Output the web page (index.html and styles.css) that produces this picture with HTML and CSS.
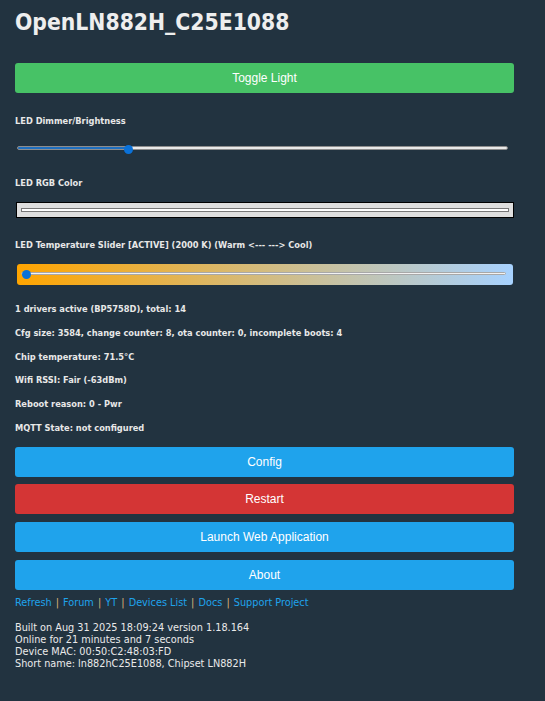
FILE: index.html
```html
<!DOCTYPE html>
<html lang="en">
<head>
    <meta charset="UTF-8">
    <meta name="viewport" content="width=device-width, initial-scale=1.0">
    <title>OpenLN882H_C25E1088</title>
    <link rel="stylesheet" href="styles.css">
</head>
<body>
    <div class="page">
        <h1 class="title">OpenLN882H_C25E1088</h1>

        <button class="btn btn-green">Toggle Light</button>

        <h5 class="label label-dimmer">LED Dimmer/Brightness</h5>
        <input type="range" class="dimmer" min="0" max="100" value="22" style="--fill: 22.8%">

        <h5 class="label label-rgb">LED RGB Color</h5>
        <input type="color" class="rgb" value="#ffffff">

        <h5 class="label label-temp">LED Temperature Slider [ACTIVE] (2000 K) (Warm &lt;--- ---&gt; Cool)</h5>
        <input type="range" class="temp" min="0" max="100" value="0">

        <div class="info">
            <h5 class="label">1 drivers active (BP5758D), total: 14</h5>
            <h5 class="label">Cfg size: 3584, change counter: 8, ota counter: 0, incomplete boots: 4</h5>
            <h5 class="label">Chip temperature: 71.5°C</h5>
            <h5 class="label">Wifi RSSI: Fair (-63dBm)</h5>
            <h5 class="label">Reboot reason: 0 - Pwr</h5>
            <h5 class="label">MQTT State: not configured</h5>
        </div>

        <div class="menu">
            <button class="btn">Config</button>
            <button class="btn btn-red">Restart</button>
            <button class="btn">Launch Web Application</button>
            <button class="btn">About</button>
        </div>

        <div class="links">
            <a href="#">Refresh</a> <span class="sep">|</span>
            <a href="#">Forum</a> <span class="sep">|</span>
            <a href="#">YT</a> <span class="sep">|</span>
            <a href="#">Devices List</a> <span class="sep">|</span>
            <a href="#">Docs</a> <span class="sep">|</span>
            <a href="#">Support Project</a>
        </div>

        <div class="build">
            Built on Aug 31 2025 18:09:24 version 1.18.164<br>
            Online for 21 minutes and 7 seconds<br>
            Device MAC: 00:50:C2:48:03:FD<br>
            Short name: ln882hC25E1088, Chipset LN882H
        </div>
    </div>
</body>
</html>
```

FILE: styles.css
```css
body {
    margin: 0;
    background-color: #223340;
    color: #eaeaea;
    font-family: "DejaVu Sans Condensed", "DejaVu Sans", sans-serif;
}
.page {
    width: 499px;
    padding: 9px 15px 0;
    display: flex;
    flex-direction: column;
}
.title {
    margin: 0 0 28px;
    font-size: 22.7px;
    line-height: 26px;
    font-weight: bold;
    color: #eeeeee;
}
.btn {
    height: 30px;
    padding: 0;
    border: none;
    border-radius: 3px;
    background-color: #1fa3ec;
    color: #ffffff;
    font-family: "Liberation Sans", Arial, sans-serif;
    font-size: 12px;
    cursor: pointer;
}
.btn-green {
    background-color: #47c266;
}
.btn-red {
    background-color: #d43535;
}
.label {
    margin: 0;
    font-size: 9.2px;
    line-height: 12px;
    font-weight: bold;
    color: #e8e8e8;
}
.label-dimmer {
    margin-top: 22px;
}
.label-rgb {
    margin-top: 24px;
}
.label-temp {
    margin-top: 21px;
}

/* brightness slider */
.dimmer {
    -webkit-appearance: none;
    appearance: none;
    height: 10px;
    margin: 16px 6px 0 2px;
    background: transparent;
}
.dimmer::-webkit-slider-runnable-track {
    height: 4px;
    border: 1px solid #8d8d8d;
    border-radius: 3px;
    background: linear-gradient(to right, #1f6fbf var(--fill), #e9e9e9 var(--fill));
}
.dimmer::-webkit-slider-thumb {
    -webkit-appearance: none;
    width: 9px;
    height: 9px;
    margin-top: -2.5px;
    border-radius: 50%;
    background: #0a71d8;
}

/* colour picker */
.rgb {
    -webkit-appearance: none;
    appearance: none;
    box-sizing: border-box;
    width: 498px;
    height: 16px;
    margin: 13px 0 0 1px;
    padding: 5px 4px;
    border: 1px solid #000000;
    background: #dedede;
}
.rgb::-webkit-color-swatch-wrapper {
    padding: 0;
}
.rgb::-webkit-color-swatch {
    border: 1px solid #777777;
    border-radius: 0;
}

/* temperature slider */
.temp {
    -webkit-appearance: none;
    appearance: none;
    height: 21px;
    margin: 13px 1px 0 2px;
    padding: 0 7px 2px 4px;
    box-sizing: border-box;
    border-radius: 3px;
    background: linear-gradient(to right, #ffa500, #a7d2ff);
}
.temp::-webkit-slider-runnable-track {
    height: 3px;
    border: 1px solid #a8a8a8;
    border-radius: 3px;
    background: #f2f2f2;
}
.temp::-webkit-slider-thumb {
    -webkit-appearance: none;
    width: 9px;
    height: 9px;
    margin-top: -3px;
    border-radius: 50%;
    background: #0a71d8;
}

.info {
    display: flex;
    flex-direction: column;
    gap: 11.8px;
    margin-top: 18px;
}
.menu {
    display: flex;
    flex-direction: column;
    gap: 7.7px;
    margin-top: 12.7px;
}
.links {
    margin-top: 7.7px;
    font-size: 10.8px;
    line-height: 12px;
}
.links a {
    color: #1fa3ec;
    text-decoration: none;
}
.sep {
    margin: 0 1px;
    color: #dcb47a;
}
.build {
    margin-top: 12.4px;
    font-size: 10.8px;
    line-height: 11.9px;
    color: #eaeaea;
}
```
